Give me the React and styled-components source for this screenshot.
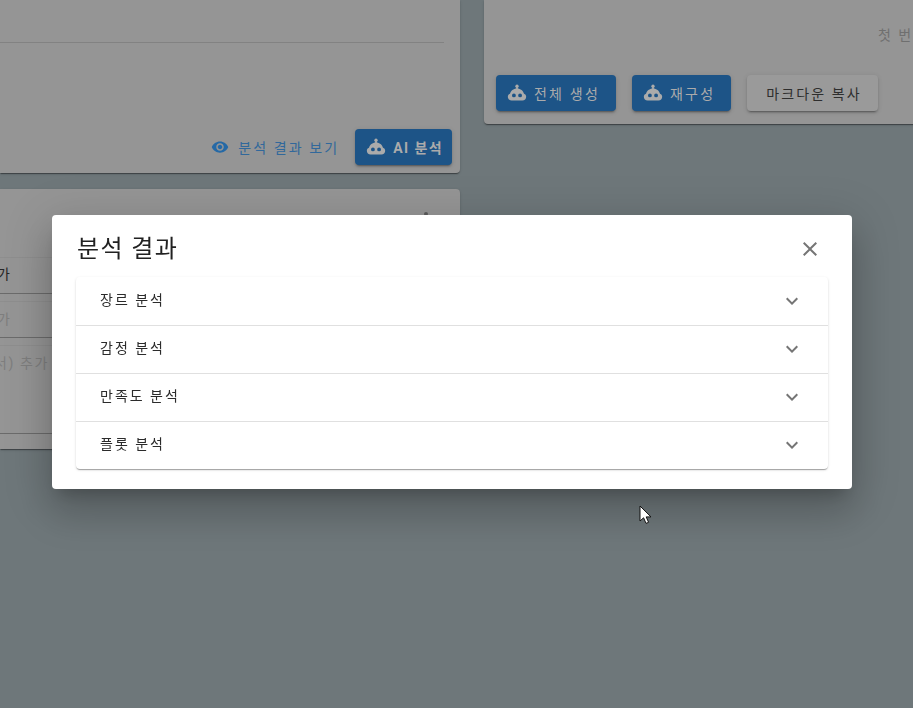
import React from 'react'
import styled, { createGlobalStyle } from 'styled-components'
import { MdExpandMore, MdClose, MdVisibility } from 'react-icons/md'

const GlobalStyle = createGlobalStyle`
  html, body {
    margin: 0;
    padding: 0;
    height: 100%;
    overflow: hidden;
    background: #6e777a;
    font-family: Roboto, "Noto Sans CJK KR", sans-serif;
  }
`

const RobotIcon = ({ size = 20 }) => (
  <svg width={size} height={size} viewBox="0 0 24 24" fill="currentColor">
    <circle cx="12" cy="3.8" r="2" />
    <rect x="11" y="4" width="2" height="4" />
    <path fillRule="evenodd" d="M12 6.5c-4.4 0-7.5 2.8-8.4 6.3C2 13.2 1 14.6 1 16.4 1 18.9 2.9 21 5.4 21h13.2c2.5 0 4.4-2.1 4.4-4.6 0-1.8-1-3.2-2.6-3.6-.9-3.5-4-6.3-8.4-6.3zM8.3 12.6a2.3 2.3 0 1 0 0 4.6 2.3 2.3 0 0 0 0-4.6zm7.4 0a2.3 2.3 0 1 0 0 4.6 2.3 2.3 0 0 0 0-4.6z" />
  </svg>
)

const CursorIcon = () => (
  <svg width="13" height="20" viewBox="0 0 13 20">
    <path d="M1 1v15l3.6-3.2 2.4 5.6 2.6-1.1-2.4-5.4H12z" fill="#fff" stroke="#111" strokeWidth="1" />
  </svg>
)

const App = () => {
  const sections = ['장르 분석', '감정 분석', '만족도 분석', '플롯 분석']

  return (
    <>
      <GlobalStyle />
      <Page>
        <LeftColumn>
          <AnalysisCard>
            <Divider />
            <CardActions>
              <TextButton><MdVisibility size={18} />분석 결과 보기</TextButton>
              <PrimaryButton $bold><RobotIcon />AI 분석</PrimaryButton>
            </CardActions>
          </AnalysisCard>
          <ListCard>
            <CollapseMark />
            <ListRow>가</ListRow>
            <ListRow $muted>가</ListRow>
            <ListRow $muted $tall>서) 추가</ListRow>
          </ListCard>
        </LeftColumn>
        <ResultCard>
          <Placeholder>첫 번째 장을 생성해 주세요</Placeholder>
          <ResultActions>
            <PrimaryButton><RobotIcon />전체 생성</PrimaryButton>
            <PrimaryButton><RobotIcon />재구성</PrimaryButton>
            <GreyButton>마크다운 복사</GreyButton>
          </ResultActions>
        </ResultCard>
      </Page>

      <Backdrop>
        <Dialog>
          <DialogHead>
            <DialogTitle>분석 결과</DialogTitle>
            <CloseButton><MdClose size={24} /></CloseButton>
          </DialogHead>
          <Accordion>
            {sections.map((label) => (
              <AccordionRow key={label}>
                <RowLabel>{label}</RowLabel>
                <MdExpandMore size={24} />
              </AccordionRow>
            ))}
          </Accordion>
        </Dialog>
      </Backdrop>

      <Cursor><CursorIcon /></Cursor>
    </>
  )
}

const Page = styled.div`
  display: grid;
  grid-template-columns: 460px 1fr;
  column-gap: 24px;
  align-items: start;
  width: 960px;
  height: 708px;
  overflow: hidden;
`

const LeftColumn = styled.div`
  display: flex;
  flex-direction: column;
  gap: 16px;
`

const Card = styled.div`
  background: #959595;
  border-radius: 4px;
  box-shadow: 0 2px 1px -1px rgba(0, 0, 0, .25), 0 1px 1px rgba(0, 0, 0, .18), 0 1px 3px rgba(0, 0, 0, .14);
`

const AnalysisCard = styled(Card)`
  height: 173px;
  border-radius: 0 0 4px 0;
  padding: 42px 8px 8px 0;
  box-sizing: border-box;
  display: flex;
  flex-direction: column;
`

const Divider = styled.div`
  height: 1px;
  margin-right: 8px;
  background: #828282;
`

const CardActions = styled.div`
  margin-top: auto;
  display: flex;
  justify-content: flex-end;
  align-items: center;
  gap: 8px;
`

const BaseButton = styled.button`
  display: inline-flex;
  align-items: center;
  height: 36px;
  border: 0;
  border-radius: 4px;
  font-family: inherit;
  font-size: 14px;
  font-weight: 400;
  white-space: nowrap;
  padding: 0;
`

const TextButton = styled(BaseButton)`
  gap: 9px;
  padding: 0 8px;
  letter-spacing: 2.1px;
  background: transparent;
  color: #31689b;

  svg {
    color: #2569a6;
  }
`

const PrimaryButton = styled(BaseButton)`
  gap: 7px;
  padding: 0 ${({ $bold }) => ($bold ? '9px' : '16px')} 0 11px;
  background: #1d5487;
  color: #ababab;
  letter-spacing: ${({ $bold }) => ($bold ? '1.4px' : '2.2px')};
  font-weight: ${({ $bold }) => ($bold ? 700 : 400)};
  box-shadow: 0 3px 1px -2px rgba(0, 0, 0, .2), 0 2px 2px rgba(0, 0, 0, .14), 0 1px 5px rgba(0, 0, 0, .12);
`

const GreyButton = styled(BaseButton)`
  padding: 0 16px 0 19px;
  letter-spacing: 2.1px;
  background: #9a9a9a;
  color: #2e2e2e;
  box-shadow: 0 3px 1px -2px rgba(0, 0, 0, .2), 0 2px 2px rgba(0, 0, 0, .14), 0 1px 5px rgba(0, 0, 0, .12);
`

const ListCard = styled(Card)`
  position: relative;
  height: 260px;
  padding-top: 68px;
  box-sizing: border-box;
  border-radius: 0 4px 4px 0;
`

const CollapseMark = styled.span`
  position: absolute;
  top: 23px;
  right: 32px;
  width: 4px;
  height: 4px;
  border-radius: 50%;
  background: #5c5c5c;
`

const ListRow = styled.div`
  height: ${({ $tall }) => ($tall ? '89px' : '37px')};
  margin-bottom: 7px;
  padding-top: ${({ $muted }) => ($muted ? '6px' : '5px')};
  box-sizing: border-box;
  overflow: hidden;
  font-size: 14px;
  letter-spacing: 1.6px;
  text-indent: ${({ $tall }) => ($tall ? '-6px' : '-3px')};
  color: ${({ $muted }) => ($muted ? '#7e7e7e' : '#262626')};
  border-top: 1px solid #8e8e8e;
  border-bottom: 1px solid #6b6b6b;
`

const ResultCard = styled(Card)`
  height: 124px;
  padding: 0 12px;
  box-sizing: border-box;
  border-radius: 0 0 0 4px;
  display: flex;
  flex-direction: column;
`

const Placeholder = styled.div`
  margin: 24px 0 0 382px;
  font-size: 14px;
  letter-spacing: 2px;
  color: #6f6f6f;
  white-space: nowrap;
`

const ResultActions = styled.div`
  margin-top: auto;
  margin-bottom: 13px;
  display: flex;
  gap: 16px;
`

const Backdrop = styled.div`
  position: fixed;
  inset: 0 9px 0 0;
  display: flex;
  justify-content: center;
  padding-top: 215px;
  box-sizing: border-box;
`

const Dialog = styled.div`
  width: 800px;
  height: 274px;
  box-sizing: border-box;
  padding: 0 24px;
  background: #fff;
  border-radius: 4px;
  box-shadow: 0 11px 15px -7px rgba(0, 0, 0, .2), 0 24px 38px 3px rgba(0, 0, 0, .14), 0 9px 46px 8px rgba(0, 0, 0, .12);
`

const DialogHead = styled.div`
  height: 62px;
  display: flex;
  align-items: center;
  justify-content: space-between;
`

const DialogTitle = styled.h2`
  margin: 0 0 0 1px;
  font-size: 24px;
  font-weight: 400;
  letter-spacing: 1.4px;
  color: #212121;
`

const CloseButton = styled.button`
  display: flex;
  padding: 0;
  margin: 6px 6px 0 0;
  border: 0;
  background: none;
  color: #757575;
`

const Accordion = styled.div`
  border-radius: 4px;
  box-shadow: 0 2px 1px -1px rgba(0, 0, 0, .2), 0 1px 1px rgba(0, 0, 0, .14), 0 1px 3px rgba(0, 0, 0, .12);
`

const AccordionRow = styled.div`
  display: flex;
  align-items: center;
  justify-content: space-between;
  height: 48px;
  box-sizing: border-box;
  padding: 0 24px;
  font-size: 14px;
  letter-spacing: 2px;
  color: #2b2b2b;

  & + & {
    border-top: 1px solid #e0e0e0;
  }

  svg {
    color: #757575;
  }

  & + & svg {
    margin-top: -1px;
  }
`

const RowLabel = styled.span`
  padding-bottom: 4px;

  ${AccordionRow} + ${AccordionRow} & {
    padding-bottom: 6px;
  }
`

const Cursor = styled.div`
  position: fixed;
  left: 639px;
  top: 505px;
  line-height: 0;
`

export default App
